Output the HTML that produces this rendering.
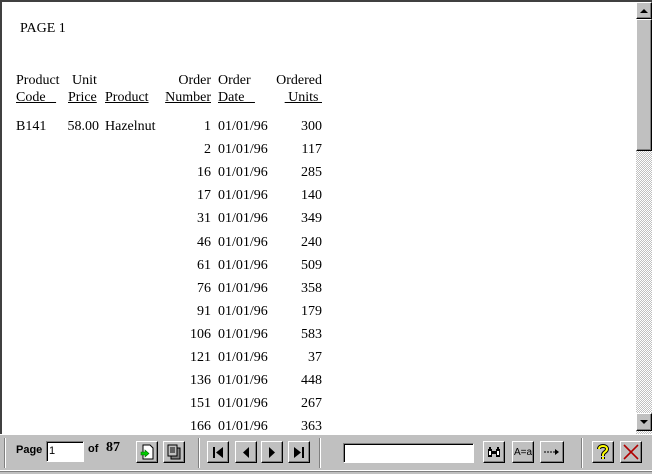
<!DOCTYPE html>
<html><head><style>
*{margin:0;padding:0;box-sizing:border-box}
body{width:652px;height:474px;overflow:hidden;background:#c0c0c0;font-family:"Liberation Serif",serif;font-size:14px;position:relative}
.main{position:absolute;left:0;top:0;width:636px;height:434px;background:#fff;border-top:2px solid #404040;border-left:2px solid #404040}
.t{position:absolute;white-space:nowrap;line-height:15px;color:#000}
.r{text-align:right}
.u{text-decoration:underline}
.sb{position:absolute;left:636px;top:0;width:16px;height:434px;background:repeating-conic-gradient(#c0c0c0 0 25%,#fff 0 50%) 0 0/2px 2px;border-top:2px solid #404040}
.btn{position:absolute;background:#c0c0c0;border:1px solid;border-color:#fff #000 #000 #fff;box-shadow:inset -1px -1px #808080}
.tb{position:absolute;left:0;top:434px;width:652px;height:40px;background:#c0c0c0;border-top:1px solid #fff}
.sep{position:absolute;top:3px;width:2px;height:30px;border-left:1px solid #808080;border-right:1px solid #fff}
.inp{position:absolute;background:#fff;border:1px solid;border-color:#808080 #fff #fff #808080;box-shadow:inset 1px 1px #000}
.tb .btn{width:22px;height:22px;top:6px;display:flex;align-items:center;justify-content:center;font-family:"Liberation Sans",sans-serif;font-size:10px}
</style></head><body>
<div class="main"></div>
<div class="t" style="left:20px;top:21px">PAGE 1</div>
<div class="t" style="left:16px;top:73px">Product</div>
<div class="t u" style="left:16px;top:90px">Code&nbsp;&nbsp;&nbsp;</div>
<div class="t" style="left:72px;top:73px">Unit</div>
<div class="t u" style="left:68px;top:90px">Price</div>
<div class="t u" style="left:105px;top:90px">Product</div>
<div class="t r" style="left:150px;width:61px;top:73px">Order</div>
<div class="t u r" style="left:150px;width:61px;top:90px">Number</div>
<div class="t" style="left:218px;top:73px">Order</div>
<div class="t u" style="left:218px;top:90px">Date&nbsp;&nbsp;&nbsp;</div>
<div class="t r" style="left:260px;width:62px;top:73px">Ordered</div>
<div class="t u r" style="left:260px;width:62px;top:90px">&nbsp;Units&nbsp;</div>
<div class="t" style="left:16px;top:119px">B141</div>
<div class="t r" style="left:50px;width:49px;top:119px">58.00</div>
<div class="t" style="left:105px;top:119px">Hazelnut</div>
<div id="rows"></div>
<script>
var n=[1,2,16,17,31,46,61,76,91,106,121,136,151,166],u=[300,117,285,140,349,240,509,358,179,583,37,448,267,363],h='';
for(var i=0;i<14;i++){var y=Math.round(119+i*23.1);h+='<div class="t r" style="left:150px;width:61px;top:'+y+'px">'+n[i]+'</div><div class="t" style="left:218px;top:'+y+'px">01/01/96</div><div class="t r" style="left:260px;width:62px;top:'+y+'px">'+u[i]+'</div>';}
document.getElementById('rows').innerHTML=h;
</script>
<div class="sb"></div>
<div class="btn" style="left:636px;top:2px;width:16px;height:17px"><svg width="14" height="15"><path d="M3 10h8L7 6z" fill="#000"/></svg></div>
<div class="btn" style="left:636px;top:19px;width:16px;height:132px"></div>
<div class="btn" style="left:636px;top:413px;width:16px;height:18px"><svg width="14" height="15"><path d="M3 6h8L7 10z" fill="#000"/></svg></div>
<div class="tb">
<div class="sep" style="left:4px"></div>
<div style="position:absolute;left:16px;top:9px;font:bold 11px 'Liberation Sans',sans-serif">Page</div>
<div class="inp" style="left:46px;top:6px;width:38px;height:21px;font:11px 'Liberation Sans',sans-serif;padding:3px 2px">1</div>
<div style="position:absolute;left:88px;top:8px;font:bold 11px 'Liberation Sans',sans-serif">of</div>
<div style="position:absolute;left:106px;top:5px;font:bold 14px 'Liberation Serif',serif">87</div>
<div class="btn" style="left:136px"><svg width="16" height="16"><path d="M4 1h7l3 3v11H4z" fill="#fff" stroke="#000"/><path d="M2 8h4V6l4 3.5-4 3.5v-2H2z" fill="#0c0" stroke="#060" stroke-width=".6"/></svg></div>
<div class="btn" style="left:163px"><svg width="16" height="16"><rect x="5" y="4" width="9" height="11" fill="#808080" stroke="#000"/><rect x="2" y="1" width="9" height="11" fill="#c0c0c0" stroke="#000"/><path d="M4 4h5M4 6h5M4 8h5" stroke="#000"/></svg></div>
<div class="sep" style="left:198px"></div>
<div class="btn" style="left:207px"><svg width="14" height="14"><rect x="2" y="2" width="2" height="11"/><path d="M12 2v11L5 7.5z"/></svg></div>
<div class="btn" style="left:235px"><svg width="14" height="14"><path d="M10 2v11L4 7.5z"/></svg></div>
<div class="btn" style="left:261px"><svg width="14" height="14"><path d="M4 2v11l6-5.5z"/></svg></div>
<div class="btn" style="left:288px"><svg width="14" height="14"><path d="M2 2v11l7-5.5z"/><rect x="10" y="2" width="2" height="11"/></svg></div>
<div class="sep" style="left:319px"></div>
<div class="inp" style="left:343px;top:8px;width:131px;height:20px"></div>
<div class="btn" style="left:483px"><svg width="16" height="14"><path d="M2 4h4v8H2zM10 4h4v8h-4zM3 2h2v2H3zM11 2h2v2h-2zM6 6h4v3H6z" fill="#000"/><path d="M3 6h2v4H3zM11 6h2v4h-2z" fill="#fff"/></svg></div>
<div class="btn" style="left:512px">A=a</div>
<div class="btn" style="left:540px;width:24px"><svg width="18" height="10"><path d="M1 5h11" stroke="#000" stroke-dasharray="2 1"/><path d="M12 2l4 3-4 3z"/></svg></div>
<div class="sep" style="left:581px"></div>
<div class="btn" style="left:592px"><svg width="18" height="18"><path d="M5 6c0-4 8-4 8 0 0 3-4 3-4 6v1M9 14v2" fill="none" stroke="#000" stroke-width="4"/><path d="M5 6c0-4 8-4 8 0 0 3-4 3-4 6v1M9 14v2" fill="none" stroke="#ff0" stroke-width="2"/></svg></div>
<div class="btn" style="left:620px"><svg width="18" height="18"><path d="M2 2l14 14M16 2L2 16" stroke="#b00000" stroke-width="1.6"/></svg></div>
</div>
<div style="position:absolute;left:0;top:470px;width:652px;height:1px;background:#fff"></div>
<div style="position:absolute;left:0;top:471px;width:652px;height:1px;background:#808080"></div>
</body></html>
